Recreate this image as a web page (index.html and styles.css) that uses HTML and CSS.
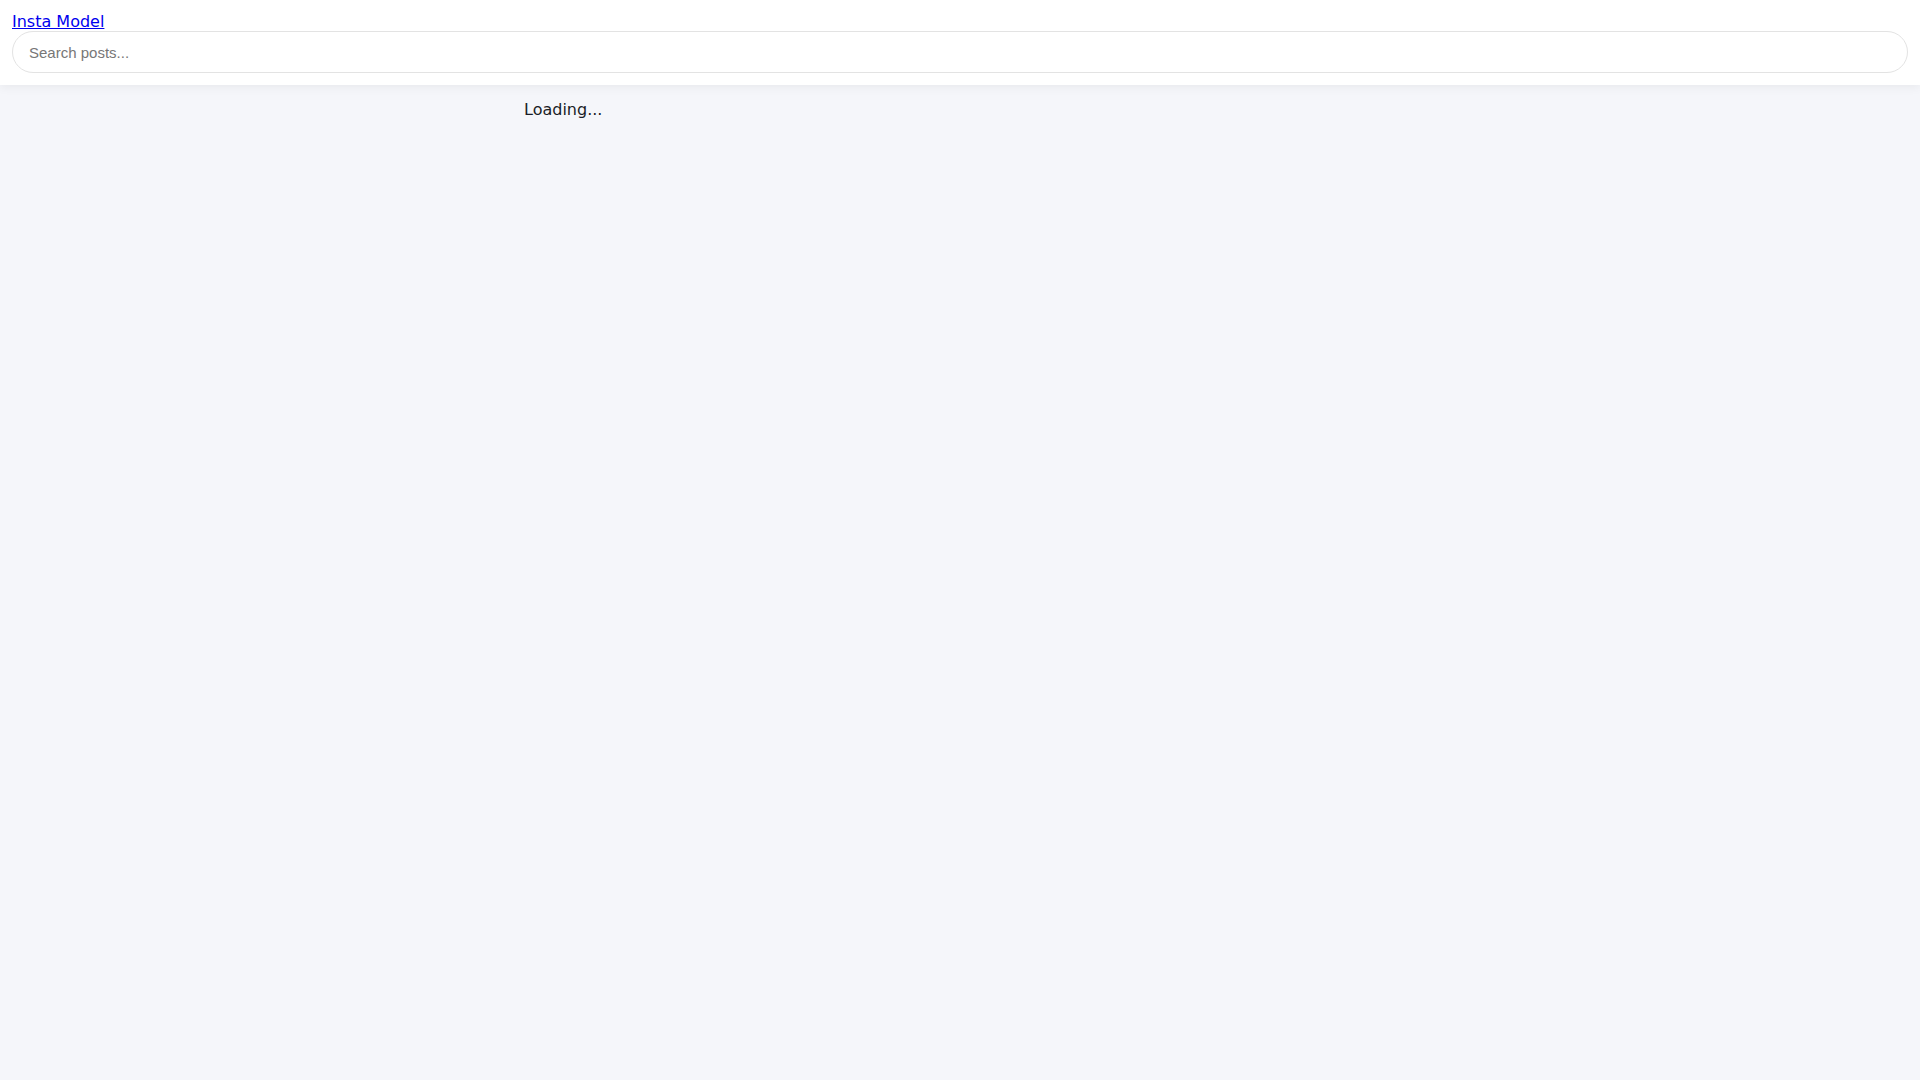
FILE: index.html
```html
<!DOCTYPE html>
<html lang="en">
<head>
<meta charset="utf-8">
<title>Insta Model</title>
<link rel="stylesheet" href="styles.css">
</head>
<body>
<header class="topbar">
  <a class="brand" href="#">Insta Model</a>
  <input class="search" type="text" placeholder="Search posts...">
</header>
<main class="content">
  <p class="loading">Loading...</p>
</main>
</body>
</html>
```

FILE: styles.css
```css
html, body {
  margin: 0;
  padding: 0;
  height: 100%;
}
body {
  background: #f5f6fa;
  font-family: "DejaVu Sans", sans-serif;
  font-size: 16px;
  color: #1a1d26;
}
.topbar {
  background: #ffffff;
  padding: 12px 12px 12px;
  display: flex;
  flex-direction: column;
  align-items: flex-start;
  box-shadow: 0 2px 10px rgba(0, 0, 0, 0.06);
  position: relative;
  z-index: 1;
}
.brand {
  color: #0000ee;
  text-decoration: underline;
  font-size: 16px;
  line-height: 19px;
}
.search {
  box-sizing: border-box;
  width: 100%;
  height: 42px;
  border: 1px solid #e3e3e3;
  border-radius: 21px;
  padding: 0 16px;
  font-family: "Liberation Sans", Arial, sans-serif;
  font-size: 15px;
  color: #333;
  background: #fff;
  outline: none;
}
.search::placeholder {
  color: #777;
}
.content {
  width: 872px;
  margin: 0 auto;
  padding-top: 15px;
}
.loading {
  margin: 0;
  line-height: 19px;
}
```
